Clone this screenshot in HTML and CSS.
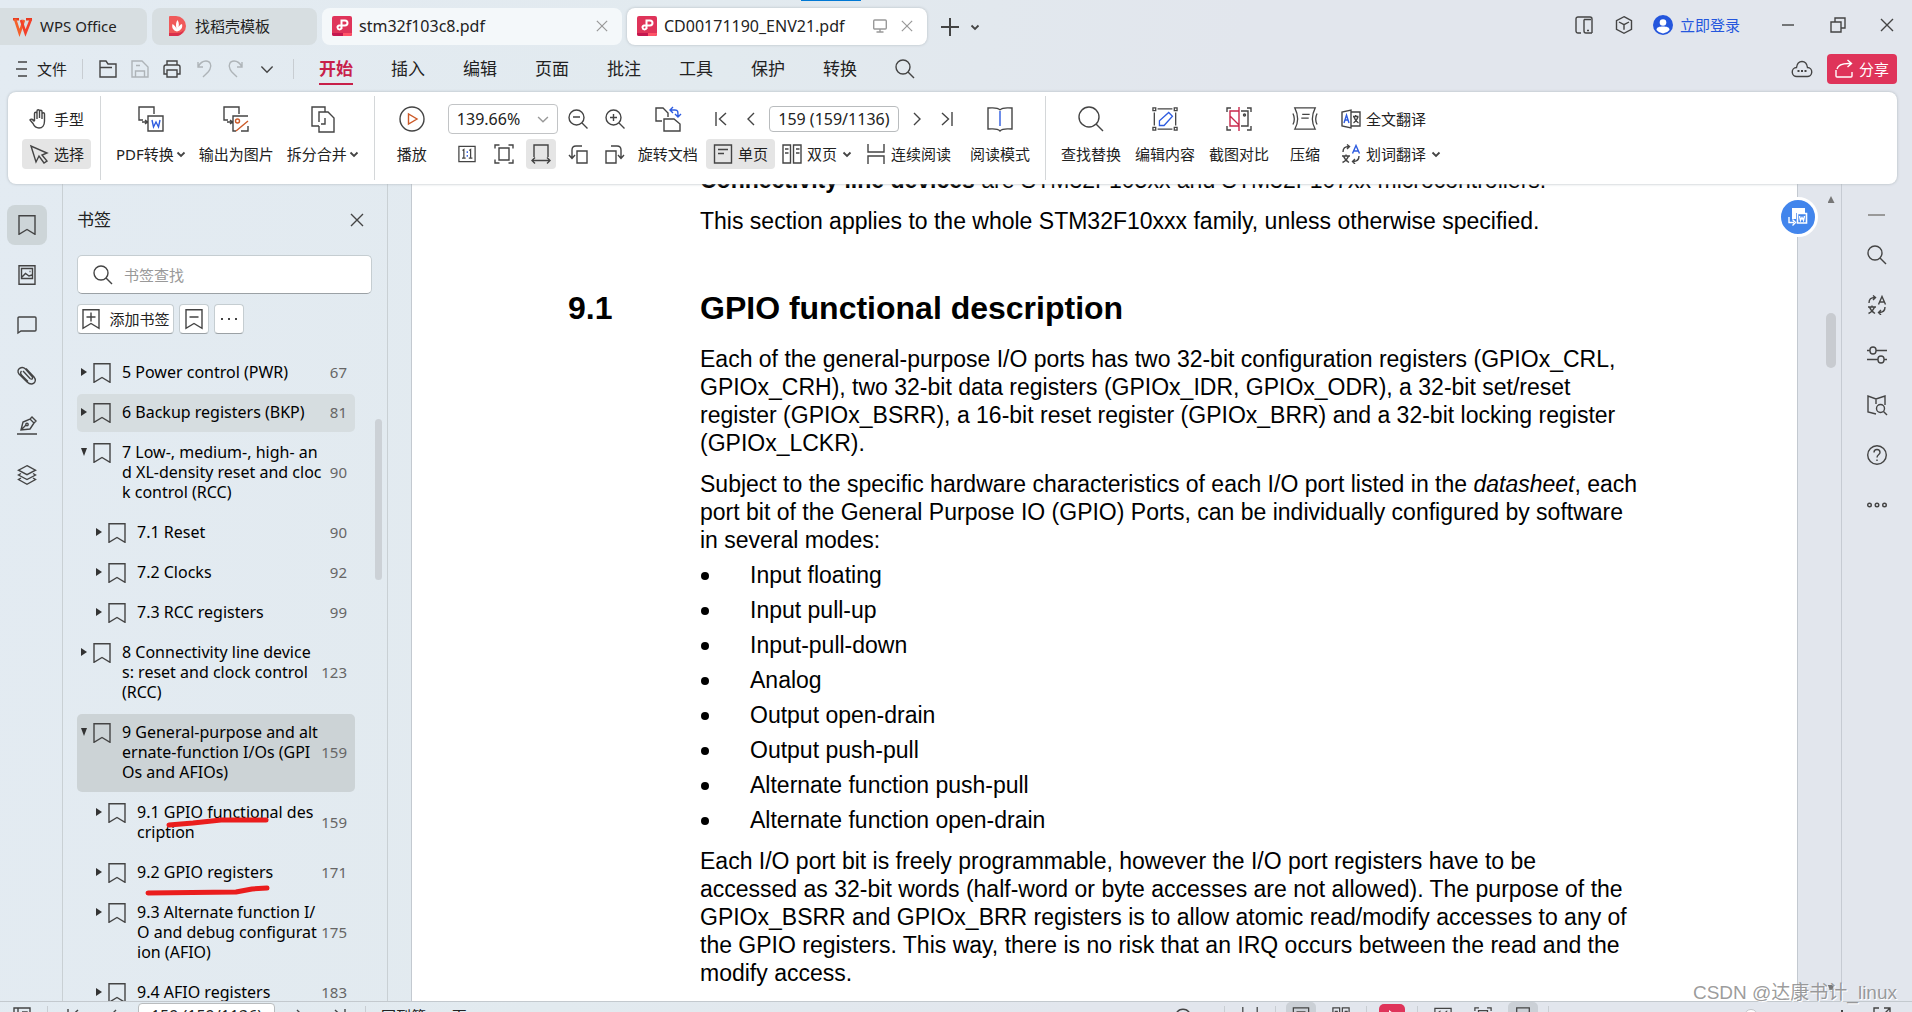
FILE: index.html
```html
<!DOCTYPE html>
<html lang="zh-CN">
<head>
<meta charset="utf-8">
<title>CD00171190_ENV21.pdf - WPS Office</title>
<link rel="stylesheet" href="styles.css">
</head>
<body>
<svg class="sprite" aria-hidden="true">
  <symbol id="i-pdf" viewBox="0 0 20 20"><rect width="20" height="20" rx="2" fill="#df345a"/><path d="M0 17h20v1a2 2 0 0 1-2 2H2a2 2 0 0 1-2-2z" fill="#c4174f"/><path d="M11 17h9v1a2 2 0 0 1-2 2h-7z" fill="#ff5468"/><path d="M9.500 13V4.500h3.500a2.500 2.500 0 0 1 0 5H7a2 2 0 1 0 2.500 2.200" fill="none" stroke="#fff" stroke-width="2"/></symbol>
  <symbol id="i-close" viewBox="0 0 14 14"><path d="M1 1l12 12M13 1L1 13"/></symbol>
  <symbol id="i-down" viewBox="0 0 10 10"><path d="M1.500 3.500L5 7l3.500-3.500" vector-effect="non-scaling-stroke"/></symbol>
  <symbol id="i-search" viewBox="0 0 20 20"><circle cx="8" cy="8" r="7"/><path d="M13 13l6 6"/></symbol>
  <symbol id="i-bookmark" viewBox="0 0 20 20"><path d="M2 .7h16v18.600l-8-4.800-8 4.800z"/></symbol>
  <symbol id="i-first" viewBox="0 0 12 14"><path d="M1 0v14M11 1L4.500 7l6.500 6"/></symbol>
  <symbol id="i-prev" viewBox="0 0 12 14"><path d="M9 1L3 7l6 6"/></symbol>
  <symbol id="i-next" viewBox="0 0 12 14"><path d="M3 1l6 6-6 6"/></symbol>
  <symbol id="i-last" viewBox="0 0 12 14"><path d="M11 0v14M1 1l6.500 6L1 13"/></symbol>
  <symbol id="i-one" viewBox="0 0 20 20"><path d="M1 1.500h18v17H1zM5 6l1.500-1v9.500M4.500 14.500h4M12.500 6L14 5v9.500M12 14.500h4"/><path d="M10.300 7v2M10.300 11v2" stroke="#2e5ce0"/></symbol>
  <symbol id="i-fit" viewBox="0 0 20 20"><path d="M5 4h10v12H5zM1 4.500V1h4.500M14.500 1H19v3.500M19 15.500V19h-4.500M5.500 19H1v-3.500"/></symbol>
  <symbol id="i-width" viewBox="0 0 20 20"><path d="M3 13V1h14v12M1 16.500h18M4 13.500l-3 3 3 3M16 13.500l3 3-3 3"/></symbol>
  <symbol id="i-single" viewBox="0 0 20 20"><path d="M1.500 1h17v18h-17zM5 5.500h10M5 9.500h6"/></symbol>
  <symbol id="i-double" viewBox="0 0 20 20"><path d="M1 1h7.500v18H1zM11.500 1H19v18h-7.500zM3 5h3.500M3 9h3.500M14 5h3.500M14 9h3.500"/></symbol>
  <symbol id="i-cont" viewBox="0 0 20 20"><path d="M2 0v8h16V0M2 20v-8h16v8"/></symbol>
  <symbol id="i-trans" viewBox="0 0 20 20"><path d="M2 8c0-4 2-5.500 6-5.500M6 .5l2.500 2L6 5M18 12c0 4-2 5.500-6 5.500M14 15l-2.500 2.500L14 20"/><path d="M1 12h8M5 10.500V12M2.500 12c1 3 3 5 5.500 6.500M7.500 12c-1 3-3 5-6 6.500"/><path class="accent" d="M11.500 9.500L15 1.500l3.500 8M12.700 7h4.600"/></symbol>
</svg>

<div class="app">
  <header class="titlebar">
    <nav class="tabs" aria-label="标签页">
      <button class="tab tab-home"><svg class="ic" viewBox="0 0 20 18"><path d="M0 2.200h6M13 2.200h6" stroke="#e8391f" stroke-width="2.500"/><path d="M2 2l4.500 14L11 3" stroke="#f4602a" stroke-width="2.600"/><path d="M8 3l4.500 13L18 2" stroke="#f2402a" stroke-width="2.600"/></svg>WPS Office</button>
      <button class="tab tab-docer"><svg class="ic art" viewBox="0 0 20 20"><path d="M1 1a1 1 0 0 1 1-1h6a10 10 0 0 1 0 20H1z" fill="#f05a5a"/><path d="M1 17h8c3 0 5-1 7-3-2 4-4 6-8 6H1z" fill="#d9304c"/><path d="M9 15.500c-4-1-5.500-4-4.500-7.500 2 1 3.500 3 4 5-1-4-.5-7 1-9 2 3 1.500 6 .5 9 .5-2.500 1.500-4 4-5 1 3.500-1 6.500-5 7.500z" fill="#fff"/></svg>找稻壳模板</button>
      <button class="tab tab-file"><svg class="ic art"><use href="#i-pdf"/></svg><span>stm32f103c8.pdf</span><svg class="ic s12 dim"><use href="#i-close"/></svg></button>
      <button class="tab tab-file active"><svg class="ic art"><use href="#i-pdf"/></svg><span>CD00171190_ENV21.pdf</span><svg class="ic s14 dim" viewBox="0 0 14 14"><rect x=".7" y="1" width="12.600" height="9" rx="1"/><path d="M7 10v3M3.500 13h7"/></svg><svg class="ic s12 dim"><use href="#i-close"/></svg></button>
      <button class="plain" aria-label="新建"><svg class="ic s18" viewBox="0 0 18 18"><path d="M9 0v18M0 9h18" stroke-width="2"/></svg></button>
      <button class="plain more-tabs" aria-label="标签列表"><svg class="ic s10 bold"><use href="#i-down"/></svg></button>
    </nav>
    <div class="win">
      <button class="plain" aria-label="侧栏"><svg class="ic s18" viewBox="0 0 18 18"><path d="M6 17H3a2 2 0 0 1-2-2V3a2 2 0 0 1 2-2h12a2 2 0 0 1 2 2v14M9 3.500h7M9 3.500V15a2 2 0 0 0 2 2h6M12 14.500h2"/></svg></button>
      <button class="plain" aria-label="应用"><svg class="ic s18" viewBox="0 0 18 18"><path d="M9 .7l7.500 4v8.600L9 17.300l-7.500-4V4.700zM4 6l5 2.700L14 6M9 8.700v5"/></svg></button>
      <a class="login" href="#login"><svg class="ic art" viewBox="0 0 20 20"><circle cx="10" cy="10" r="10" fill="#2456dd"/><circle cx="10" cy="7.500" r="3.300" fill="#fff"/><path d="M3.500 15c0-3 3-3.500 6.500-3.500s6.500.5 6.500 3.500A9 9 0 0 1 10 18.500 9 9 0 0 1 3.500 15z" fill="#fff"/></svg>立即登录</a>
      <button class="plain" aria-label="最小化"><svg class="ic s16" viewBox="0 0 16 16"><path d="M2 8h12"/></svg></button>
      <button class="plain" aria-label="还原"><svg class="ic s16" viewBox="0 0 16 16"><path d="M1 5h10v10H1zM5 5V1h10v10h-4"/></svg></button>
      <button class="plain" aria-label="关闭"><svg class="ic s14"><use href="#i-close"/></svg></button>
    </div>
    <i class="drag-mark"></i>
  </header>

  <div class="menubar">
    <button class="plain file-menu"><svg class="ic s16" viewBox="0 0 16 16"><path d="M4 1h9M2 8h11M4 15h9"/></svg>文件</button>
    <i class="vr"></i>
    <div class="quick">
      <button class="plain" aria-label="打开"><svg class="ic s18" viewBox="0 0 18 18"><path d="M1 17V1h6l2 3h8v13zM1 7.500h12"/></svg></button>
      <button class="plain faint" aria-label="保存"><svg class="ic s18" viewBox="0 0 18 18"><path d="M4 17H1V1h10l6 6v10h-3M4.500 17v-6h9v6zM5 5.500h4"/></svg></button>
      <button class="plain" aria-label="打印"><svg class="ic s18" viewBox="0 0 18 18"><path d="M4 5V1h10v4M4 14H1V7a2 2 0 0 1 2-2h12a2 2 0 0 1 2 2v7h-3M4 10h10v7H4z"/></svg></button>
      <button class="plain faint" aria-label="撤销"><svg class="ic s18" viewBox="0 0 18 18"><path d="M3 2v5h5M3 7c2-4 5-6 8-6 4 0 6 4 4 8-1 3-4 5-7 8"/></svg></button>
      <button class="plain faint" aria-label="重做"><svg class="ic s18" viewBox="0 0 18 18"><path d="M15 2v5h-5M15 7c-2-4-5-6-8-6-4 0-6 4-4 8 1 3 4 5 7 8"/></svg></button>
      <button class="plain" aria-label="更多"><svg class="ic s16"><use href="#i-down"/></svg></button>
    </div>
    <i class="vr"></i>
    <nav class="menus">
      <a class="on" href="#home">开始</a><a href="#insert">插入</a><a href="#edit">编辑</a><a href="#page">页面</a><a href="#note">批注</a><a href="#tool">工具</a><a href="#protect">保护</a><a href="#convert">转换</a>
      <button class="plain" aria-label="搜索"><svg class="ic"><use href="#i-search"/></svg></button>
    </nav>
    <div class="share-box">
      <button class="plain" aria-label="云状态"><svg class="ic" viewBox="0 0 20 20"><path d="M5 17.500a4.500 4.500 0 0 1-.5-9C5 5 7 2.500 10 2.500S15 5 15.500 8.500a4.500 4.500 0 0 1-.5 9z"/><path d="M5.500 12h2M9 12h2M12.500 12h2" stroke-width="2"/></svg></button>
      <button class="share"><svg class="ic s18" viewBox="0 0 18 18"><path d="M1 10v6a1 1 0 0 0 1 1h14a1 1 0 0 0 1-1v-4M2 9c1-4 5-6 14-5.500M12.500 0l4 3.500-4 3.500"/></svg>分享</button>
    </div>
  </div>

  <section class="ribbon" aria-label="开始">
    <div class="group modes">
      <button class="rb"><svg class="ic" viewBox="0 0 20 20"><path d="M5.500 12V4.500a1.200 1.200 0 0 1 2.500 0V10M8 9V2a1.200 1.200 0 0 1 2.500 0v7M10.500 9V2.500a1.200 1.200 0 0 1 2.500 0V10M13 9V5a1.200 1.200 0 0 1 2.500 0v7c0 4-2 7-5.500 7-3 0-4.700-1.500-6-4.500L1 11c1-1.500 2.500-1 4.500 1.500"/></svg>手型</button>
      <button class="rb on"><svg class="ic" viewBox="0 0 20 20"><path d="M2 2l5 16 3-6 5 7 3-2-5-6 5-2z"/></svg>选择</button>
    </div>
    <div class="group convert">
      <button class="big"><svg class="ic s26" viewBox="0 0 26 26"><path d="M5 14H1V1h15v7M4 16h5M7 14l2.500 2L7 18M10 10h15v15H10z"/><path d="M14 14l1.500 7 2.500-5 2.500 5L22 14" stroke="#2e5ce0"/></svg><span>PDF转换<svg class="ic s10 bold"><use href="#i-down"/></svg></span></button>
      <button class="big"><svg class="ic s26" viewBox="0 0 26 26"><path d="M5 14H1V1h15v7M4 16h5M7 14l2.500 2L7 18M25 10H10v15h3M18 25h7v-5"/><g stroke="#cc5a28"><circle cx="14.500" cy="15" r="2"/><path d="M13 25l12-10"/></g></svg><span>输出为图片</span></button>
      <button class="big"><svg class="ic s26" viewBox="0 0 26 26"><path d="M15 6V1H2v19h7M9 16V6h9l6 6v14H9v-6M15 12v6h-4"/></svg><span>拆分合并<svg class="ic s10 bold"><use href="#i-down"/></svg></span></button>
    </div>
    <div class="group view">
      <button class="big"><svg class="ic s26" viewBox="0 0 26 26"><circle cx="13" cy="13" r="12"/><path d="M9.500 8v10l8.500-5z" stroke="#cc5a28"/></svg><span>播放</span></button>
      <div class="block">
        <div class="row zoom-row">
          <span class="combo"><select aria-label="缩放比例"><option>139.66%</option></select><svg class="ic s14 dim"><use href="#i-down"/></svg></span>
          <button class="sq" aria-label="缩小"><svg class="ic" viewBox="0 0 20 20"><circle cx="8.500" cy="8.500" r="7.500"/><path d="M14 14l5.500 5.500M5 8h7"/></svg></button>
          <button class="sq gap7" aria-label="放大"><svg class="ic" viewBox="0 0 20 20"><circle cx="8.500" cy="8.500" r="7.500"/><path d="M14 14l5.500 5.500M5 8.500h7M8.500 5v7"/></svg></button>
        </div>
        <div class="row fit-row">
          <button class="sq" aria-label="实际大小"><svg class="ic s18"><use href="#i-one"/></svg></button>
          <button class="sq" aria-label="适合页面"><svg class="ic"><use href="#i-fit"/></svg></button>
          <button class="sq on" aria-label="适合宽度"><svg class="ic"><use href="#i-width"/></svg></button>
          <button class="sq" aria-label="向左旋转"><svg class="ic" viewBox="0 0 20 20"><path d="M9 7h10v12H9zM14 2H8C5 2 4 3 4 6v8M1 11l3 3.500L7 11"/></svg></button>
          <button class="sq" aria-label="向右旋转"><svg class="ic" viewBox="0 0 20 20"><path d="M1 7h10v12H1zM6 2h6c3 0 4 1 4 4v8M13 11l3 3.500 3-3.500"/></svg></button>
        </div>
      </div>
      <button class="big tight"><svg class="ic s26" viewBox="0 0 26 26"><path d="M7 15H1V2h7l5 5v4M9 25V13h10l6 5v7z"/><path d="M18 1l-3 3 3 3M15 4h5c3 0 3 1 3 7M20 8l3 3 3-3" stroke="#2e5ce0"/></svg><span>旋转文档</span></button>
      <div class="block">
        <div class="row nav-row">
          <button class="sq" aria-label="首页"><svg class="ic s14"><use href="#i-first"/></svg></button>
          <button class="sq" aria-label="上一页"><svg class="ic s14"><use href="#i-prev"/></svg></button>
          <input class="pagebox" aria-label="页码" value="159 (159/1136)">
          <button class="sq" aria-label="下一页"><svg class="ic s14"><use href="#i-next"/></svg></button>
          <button class="sq" aria-label="末页"><svg class="ic s14"><use href="#i-last"/></svg></button>
        </div>
        <div class="row view-row">
          <button class="rb on"><svg class="ic"><use href="#i-single"/></svg>单页</button>
          <button class="rb"><svg class="ic"><use href="#i-double"/></svg>双页<svg class="ic s10 bold"><use href="#i-down"/></svg></button>
          <button class="rb"><svg class="ic"><use href="#i-cont"/></svg>连续阅读</button>
        </div>
      </div>
      <button class="big read"><svg class="ic s26" viewBox="0 0 26 26"><path d="M13 4C10 1 7 2 1 2v21c6 0 9-1 12 2 3-3 6-2 12-2V2c-6 0-9-1-12 2"/><path d="M13 5v15" stroke="#2e5ce0"/></svg><span>阅读模式</span></button>
    </div>
    <div class="group last">
      <button class="big"><svg class="ic s26" viewBox="0 0 26 26"><circle cx="11" cy="11" r="10"/><path d="M18 18l7 7"/></svg><span>查找替换</span></button>
      <button class="big"><svg class="ic s28" viewBox="0 0 28 28"><path d="M1 2h3v3H1zM24 2h3v3h-3zM1 23h3v3H1zM24 23h3v3h-3zM6 3h16M6 25h16M2.500 7v14M25.500 7v14"/><path d="M8 21v-5L18 7l4 4-9 10z" stroke="#2e5ce0"/></svg><span>编辑内容</span></button>
      <button class="big"><svg class="ic s26" viewBox="0 0 26 26"><path d="M1 6V2h4M21 2h4v4M25 20v4h-4M5 24H1v-4M15 5h7v15h-7"/><circle cx="18.500" cy="9" r="1"/><path d="M13 1v24M13 5H4v15h9M4 10l9 9" stroke="#c8284c"/></svg><span>截图对比</span></button>
      <button class="big"><svg class="ic s28" viewBox="0 0 28 28"><path d="M3 2h22c-4 8-4 16 0 23H3c4-7 4-15 0-23zM11 9h8M10 13h8M1 8c2 4 2 8 0 12M27 8c-2 4-2 8 0 12"/></svg><span>压缩</span></button>
      <div class="block">
        <button class="rb flat"><svg class="ic" viewBox="0 0 20 20"><path d="M10 4V1L1 3v14l9 2zM10 3h9v14h-9M12 7.500h5.500M14.700 6v1.500M13 8c1 3 2 4.500 4.500 6M17 8c-1 3-2 4.500-4.500 6"/><path d="M3 14l2.500-8L8 14M4 11h3" stroke="#2e5ce0"/></svg>全文翻译</button>
        <button class="rb flat blue-a"><svg class="ic"><use href="#i-trans"/></svg>划词翻译<svg class="ic s10 bold"><use href="#i-down"/></svg></button>
      </div>
    </div>
  </section>

  <main class="main">
    <nav class="rail" aria-label="侧边工具">
      <button class="on" aria-label="书签"><svg class="ic"><use href="#i-bookmark"/></svg></button>
      <button aria-label="缩略图"><svg class="ic" viewBox="0 0 20 20"><path d="M2 .7h16v18.600H2zM4.500 3.500h11v10h-11zM5 12l3.500-3.500L12 11l3-1M12.500 6.500h1"/></svg></button>
      <button aria-label="批注"><svg class="ic" viewBox="0 0 20 20"><path d="M1 18V3a1 1 0 0 1 1-1h16a1 1 0 0 1 1 1v12a1 1 0 0 1-1 1H4z"/></svg></button>
      <button aria-label="附件"><svg class="ic" viewBox="0 0 20 20"><path d="M6 6l7 7.500c2 1.500 3.500 0 2-2L8.500 4C5 .5-1.500 4 2 9l8 8c5 4.500 11 0 7-5L9 3.500M4.500 6C3 7.500 3.500 9 5 10.500l6 6"/></svg></button>
      <button aria-label="签名"><svg class="ic" viewBox="0 0 20 20"><path d="M0 19h20M4 15l2-8 7-3 4 4-4 6zM4 15l5-5M13 4l2-2 4 4-2 2"/><circle cx="10" cy="9.500" r="1.200"/></svg></button>
      <button aria-label="图层"><svg class="ic" viewBox="0 0 20 20"><path d="M10 .7l8.500 4.500L10 9.700 1.500 5.200zM4 8.500l-2.500 1.500L10 14.500l8.500-4.500L16 8.500M4 13l-2.500 1.500L10 19.300l8.500-4.800L16 13"/></svg></button>
    </nav>

    <aside class="panel">
      <div class="panel-head"><h2>书签</h2><button class="plain" aria-label="关闭书签"><svg class="ic s14"><use href="#i-close"/></svg></button></div>
      <label class="find"><svg class="ic"><use href="#i-search"/></svg><input type="text" placeholder="书签查找" aria-label="书签查找"></label>
      <div class="panel-tools">
        <button class="tool add"><svg class="ic" viewBox="0 0 20 20"><path d="M2 .7h16v18.600l-8-4.800-8 4.800zM5.500 8h9M10 3.500v9"/></svg>添加书签</button>
        <button class="tool" aria-label="删除书签"><svg class="ic" viewBox="0 0 20 20"><path d="M2 .7h16v18.600l-8-4.800-8 4.800zM5.500 8h9"/></svg></button>
        <button class="tool" aria-label="更多"><svg class="ic" viewBox="0 0 20 20"><path d="M2 10h2M9 10h2M16 10h2" stroke-width="2"/></svg></button>
      </div>
      <div class="tree-wrap">
        <ul class="tree">
          <li><i class="tw"></i><svg class="ic"><use href="#i-bookmark"/></svg><span>5 Power control (PWR)</span><b>67</b></li>
          <li class="hover"><i class="tw"></i><svg class="ic"><use href="#i-bookmark"/></svg><span>6 Backup registers (BKP)</span><b>81</b></li>
          <li><i class="tw open"></i><svg class="ic"><use href="#i-bookmark"/></svg><span>7 Low-, medium-, high- an<br>d XL-density reset and cloc<br>k control (RCC)</span><b>90</b></li>
          <li class="sub"><i class="tw"></i><svg class="ic"><use href="#i-bookmark"/></svg><span>7.1 Reset</span><b>90</b></li>
          <li class="sub"><i class="tw"></i><svg class="ic"><use href="#i-bookmark"/></svg><span>7.2 Clocks</span><b>92</b></li>
          <li class="sub"><i class="tw"></i><svg class="ic"><use href="#i-bookmark"/></svg><span>7.3 RCC registers</span><b>99</b></li>
          <li><i class="tw"></i><svg class="ic"><use href="#i-bookmark"/></svg><span>8 Connectivity line device<br>s: reset and clock control<br>(RCC)</span><b>123</b></li>
          <li class="current"><i class="tw open"></i><svg class="ic"><use href="#i-bookmark"/></svg><span>9 General-purpose and alt<br>ernate-function I/Os (GPI<br>Os and AFIOs)</span><b>159</b></li>
          <li class="sub"><i class="tw"></i><svg class="ic"><use href="#i-bookmark"/></svg><span>9.1 GPIO functional des<br>cription</span><b>159</b>
            <svg class="ink ink-a" viewBox="0 0 104 12"><path d="M3 8l24-2 28-3h45"/></svg></li>
          <li class="sub"><i class="tw"></i><svg class="ic"><use href="#i-bookmark"/></svg><span>9.2 GPIO registers</span><b>171</b>
            <svg class="ink ink-b" viewBox="0 0 126 12"><path d="M3 8l88-1 16-3 15-1"/></svg></li>
          <li class="sub"><i class="tw"></i><svg class="ic"><use href="#i-bookmark"/></svg><span>9.3 Alternate function I/<br>O and debug configurat<br>ion (AFIO)</span><b>175</b></li>
          <li class="sub"><i class="tw"></i><svg class="ic"><use href="#i-bookmark"/></svg><span>9.4 AFIO registers</span><b>183</b></li>
        </ul>
        <i class="thumb"></i>
      </div>
    </aside>

    <div class="viewer">
      <article class="page">
        <p><strong>Connectivity line devices</strong> are STM32F105xx and STM32F107xx microcontrollers.</p>
        <p>This section applies to the whole STM32F10xxx family, unless otherwise specified.</p>
        <h1><span>9.1</span>GPIO functional description</h1>
        <p>Each of the general-purpose I/O ports has two 32-bit configuration registers (GPIOx_CRL,<br>GPIOx_CRH), two 32-bit data registers (GPIOx_IDR, GPIOx_ODR), a 32-bit set/reset<br>register (GPIOx_BSRR), a 16-bit reset register (GPIOx_BRR) and a 32-bit locking register<br>(GPIOx_LCKR).</p>
        <p>Subject to the specific hardware characteristics of each I/O port listed in the <em>datasheet</em>, each<br>port bit of the General Purpose IO (GPIO) Ports, can be individually configured by software<br>in several modes:</p>
        <ul>
          <li>Input floating</li><li>Input pull-up</li><li>Input-pull-down</li><li>Analog</li><li>Output open-drain</li><li>Output push-pull</li><li>Alternate function push-pull</li><li>Alternate function open-drain</li>
        </ul>
        <p>Each I/O port bit is freely programmable, however the I/O port registers have to be<br>accessed as 32-bit words (half-word or byte accesses are not allowed). The purpose of the<br>GPIOx_BSRR and GPIOx_BRR registers is to allow atomic read/modify accesses to any of<br>the GPIO registers. This way, there is no risk that an IRQ occurs between the read and the<br>modify access.</p>
      </article>
      <div class="scroller"><i class="up"></i><i class="thumb"></i><i class="dn"></i></div>
      <button class="float" aria-label="转换为Word"><svg class="ic art" viewBox="0 0 20 20"><path d="M4 1h13v5H8v6H4z" fill="#fff"/><path d="M9.500 6.500h9v9.500h-9z" fill="#4285ec" stroke="#fff" stroke-width="1.600"/><path d="M11.500 9l1 4.500 1.500-3 1.500 3 1-4.500M1 10v5.500h5M4.500 12.500l3 3-3 3" fill="none" stroke="#fff" stroke-width="1.400"/></svg></button>
    </div>

    <nav class="rail right" aria-label="工具">
      <button class="fold" aria-label="收起"><svg class="ic" viewBox="0 0 20 20"><path d="M1 10h17" stroke="#999" stroke-width="2"/></svg></button>
      <button aria-label="搜索"><svg class="ic"><use href="#i-search"/></svg></button>
      <button aria-label="翻译"><svg class="ic"><use href="#i-trans"/></svg></button>
      <button aria-label="设置"><svg class="ic" viewBox="0 0 20 20"><path d="M0 5.500h3M9 5.500h11M0 14.500h11M17 14.500h3"/><rect x="3" y="2" width="6" height="7" rx="3"/><rect x="11" y="11" width="6" height="7" rx="3"/></svg></button>
      <button aria-label="查词"><svg class="ic" viewBox="0 0 20 20"><path d="M9 19l-8-2V1l8 3 9-3v9M9 4v5"/><circle cx="13.500" cy="13.500" r="4"/><path d="M16.500 16.500L20 20"/></svg></button>
      <button aria-label="帮助"><svg class="ic" viewBox="0 0 20 20"><circle cx="10" cy="10" r="9.300"/><path d="M7 7.500c0-4 6-4 6 0 0 2-3 2-3 5M10 14.500v1.500"/></svg></button>
      <button aria-label="更多"><svg class="ic" viewBox="0 0 20 20"><circle cx="2.500" cy="10" r="1.800"/><circle cx="10" cy="10" r="1.800"/><circle cx="17.500" cy="10" r="1.800"/></svg></button>
    </nav>
  </main>

  <footer class="status">
    <button class="st" aria-label="导航窗格"><svg class="ic s18" viewBox="0 0 18 18"><path d="M1 1h16v16H1zM5 1v16M9 5h5v5"/></svg></button>
    <i class="vr"></i>
    <div class="st-nav">
      <button class="st" aria-label="首页"><svg class="ic s14"><use href="#i-first"/></svg></button>
      <button class="st" aria-label="上一页"><svg class="ic s14"><use href="#i-prev"/></svg></button>
      <input class="pagebox" aria-label="当前页" value="159 (159/1136)">
      <button class="st" aria-label="下一页"><svg class="ic s14"><use href="#i-next"/></svg></button>
      <button class="st" aria-label="末页"><svg class="ic s14"><use href="#i-last"/></svg></button>
    </div>
    <i class="vr"></i>
    <a class="back" href="#p161">回到第161页</a>
    <div class="st-right">
      <button class="st eye" aria-label="护眼"><svg class="ic s18" viewBox="0 0 18 18"><path d="M1 9c3-9 13-9 16 0-3 9-13 9-16 0z"/><circle cx="9" cy="9" r="3"/></svg></button>
      <i class="vr"></i>
      <button class="st" aria-label="连续"><svg class="ic s18"><use href="#i-cont"/></svg></button>
      <i class="vr"></i>
      <button class="st on" aria-label="单页"><svg class="ic s18"><use href="#i-single"/></svg></button>
      <button class="st" aria-label="双页"><svg class="ic s18"><use href="#i-double"/></svg></button>
      <i class="vr"></i>
      <button class="st play" aria-label="播放"><svg class="ic s18 art" viewBox="0 0 18 18"><path d="M6 3v12l8-6z" fill="#fff"/></svg></button>
      <i class="vr"></i>
      <button class="st" aria-label="实际大小"><svg class="ic s18"><use href="#i-one"/></svg></button>
      <button class="st" aria-label="适合页面"><svg class="ic s18"><use href="#i-fit"/></svg></button>
      <button class="st on" aria-label="适合宽度"><svg class="ic s18"><use href="#i-width"/></svg></button>
      <i class="vr"></i>
      <span class="pct">140%</span>
      <input class="slider" type="range" min="0" max="100" value="50" aria-label="缩放">
      <button class="st" aria-label="放大"><svg class="ic s14" viewBox="0 0 14 14"><path d="M7 1v12M1 7h12" stroke-width="2"/></svg></button>
      <button class="st" aria-label="全屏"><svg class="ic s18" viewBox="0 0 18 18"><path d="M1 6V1h5M11 1h6v6M17 1l-6 6M1 11v6h6M1 17l6-6M17 12v5h-5"/></svg></button>
    </div>
  </footer>
  <div class="watermark">CSDN @达康书计_linux</div>
</div>
</body>
</html>
```
FILE: styles.css
```css
* { box-sizing: border-box; }
html, body { margin: 0; height: 100%; overflow: hidden; }
body {
  font: 15px/20px "Noto Sans", "Noto Sans CJK SC", sans-serif;
  color: #222;
  background: linear-gradient(100deg, #e3ebf2 0%, #e2eaef 35%, #e2e6ed 60%, #e2e6ed 100%);
}
button, input, select { font: inherit; color: inherit; }
button { background: none; border: 0; padding: 0; }
a { color: inherit; text-decoration: none; }
i { display: block; }
.sprite { display: none; }

.ic { width: 20px; height: 20px; flex: none; display: block; fill: none; stroke: #444; stroke-width: 1.4; overflow: visible; }
.ic.art { stroke: none; }
.s10 { width: 10px; height: 10px; }
.s12 { width: 12px; height: 12px; }
.s14 { width: 14px; height: 14px; }
.s16 { width: 16px; height: 16px; }
.s18 { width: 18px; height: 18px; }
.s26 { width: 26px; height: 26px; }
.s28 { width: 28px; height: 26px; }
.ic.dim { stroke: #999; }
.ic.bold { stroke-width: 1.8; }
.plain { display: flex; align-items: center; }
.faint .ic { stroke: #aeb4b8; }
.vr { width: 1px; height: 20px; background: #c8cdd2; }

.app { position: relative; display: flex; flex-direction: column; height: calc(100vh + 17px); }

/* title bar */
.titlebar { display: flex; justify-content: space-between; height: 45px; position: relative; }
.tabs { display: flex; gap: 5px; padding-top: 8px; }
.tab { display: flex; align-items: center; gap: 7px; padding-bottom: 1px; border-radius: 8px; background: #d7dee1; white-space: nowrap; }
.tab-home { width: 147px; padding-left: 13px; border-radius: 0 8px 8px 0; }
.tab-docer { width: 165px; padding-left: 16px; }
.tab-file { width: 300px; padding: 0 14px 1px 10px; background: #f4f8fa; font-size: 16px; }
.tab-file span { flex: 1; text-align: left; }
.tab-file.active { background: #fff; box-shadow: 0 0 3px #b4bbc1; gap: 14px; }
.tab-file.active span { margin-left: -7px; }
.tabs > .plain { padding-left: 9px; }
.tabs > .more-tabs { padding-left: 6px; }
.win { display: flex; align-items: center; padding: 4px 18px 0 0; gap: 22px; }
.login { display: flex; align-items: center; gap: 7px; color: #2456dd; margin-right: 18px; margin-left: -2px; }
.login ~ .plain { margin-right: 12px; }
.login ~ .plain:last-child { margin-right: 0; }
.drag-mark { position: absolute; left: 801px; top: 0; width: 60px; height: 1px; background: #0078d4; }

/* menu bar */
.menubar { display: flex; align-items: center; height: 47px; padding: 0 15px 0 14px; }
.file-menu { gap: 7px; margin-right: 15px; }
.quick { display: flex; align-items: center; gap: 14px; margin: 0 18px 0 16px; }
.menus { display: flex; align-items: center; gap: 38px; margin-left: 25px; font-size: 17px; }
.menus a { position: relative; }
.menus .on { color: #c8204a; font-weight: 700; }
.menus .on::after { content: ""; position: absolute; left: 0; right: 0; bottom: -6px; height: 2px; background: #c8204a; }
.share-box { display: flex; align-items: center; gap: 15px; margin-left: auto; }
.share { display: flex; align-items: center; gap: 6px; height: 30px; padding: 0 8px; border-radius: 4px; background: #df345a; color: #fff; }
.share .ic { stroke: #fff; }

/* ribbon */
.ribbon { position: relative; z-index: 2; display: flex; flex: none; margin: 0 15px 0 8px; height: 92px; padding: 4px 0; background: #fff; border-radius: 8px; box-shadow: 0 0 3px #aeb6bc; }
.group { display: flex; gap: 14px; padding: 8px 15px 0; border-right: 1px solid #d4d7d9; }
.group.last { border: 0; }
.modes { flex-direction: column; gap: 5px; padding: 8px 9px 0 14px; }
.convert { gap: 13px; }
.block { display: flex; flex-direction: column; gap: 5px; }
.row { display: flex; align-items: center; height: 30px; }
.rb { display: flex; align-items: center; gap: 5px; height: 30px; padding: 0 7px; border-radius: 4px; white-space: nowrap; }
.rb.flat { padding: 0; }
.on.rb, .on.sq { background: #e5e5e5; }
.big { display: flex; flex-direction: column; align-items: center; gap: 7px; min-width: 44px; padding-top: 2px; white-space: nowrap; }
.big > span { display: flex; align-items: center; gap: 2px; height: 30px; }
.tight { margin: 0 -6px; }
.read { margin-left: -6px; }
.sq { display: flex; align-items: center; justify-content: center; width: 30px; height: 30px; border-radius: 4px; }
.combo { display: flex; align-items: center; position: relative; margin-right: 5px; }
.combo select { appearance: none; width: 110px; height: 30px; padding: 0 8px; border: 1px solid #c2c4c6; border-radius: 4px; background: #fff; font-size: 16px; }
.combo .ic { position: absolute; right: 8px; }
.gap7 { margin-left: 7px; }
.fit-row { gap: 7px; padding-left: 4px; }
.pagebox { width: 130px; height: 26px; padding: 0; margin: 0 3px; text-align: center; border: 1px solid #b9bcbe; border-radius: 4px; background: #fff; font-size: 16px; }
.blue-a .ic { color: #2e5ce0; }
.accent { stroke: currentColor; }

/* body */
.main { display: flex; flex: 1; min-height: 0; }
.rail { display: flex; flex-direction: column; gap: 10px; width: 63px; padding: 21px 0 0 7px; border-right: 1px solid #c9d0d4; }
.rail button { display: flex; align-items: center; justify-content: center; width: 40px; height: 40px; border-radius: 8px; color: #444; }
.rail .on { background: #cdd5d8; }
.rail.right { width: 71px; padding: 21px 0 0 15px; border-right: 0; border-left: 1px solid #c6cbd3; }
.rail .fold { height: 20px; }

.panel { display: flex; flex-direction: column; width: 325px; padding: 24px 4px 0 14px; border-right: 1px solid #c9d0d4; }
.panel-head { display: flex; justify-content: space-between; align-items: center; height: 24px; padding-right: 19px; }
.panel-head h2 { margin: 0; font-size: 17px; font-weight: 400; }
.find { display: flex; align-items: center; gap: 11px; flex: none; height: 39px; width: 295px; margin-top: 23px; padding: 0 15px; background: #fff; border: 1px solid #c5cdd1; border-bottom-color: #9ba1a5; border-radius: 5px; }
.find input { flex: 1; min-width: 0; border: 0; padding: 0; background: none; outline: 0; }
.find input::placeholder { color: #999; opacity: 1; }
.panel-tools { display: flex; gap: 5px; margin-top: 10px; }
.tool { display: flex; align-items: center; justify-content: center; gap: 8px; width: 30px; height: 30px; background: #fff; border: 1px solid #c5cdd1; border-bottom-color: #9ba1a5; border-radius: 4px; }
.tool.add { width: 97px; white-space: nowrap; }
.tree-wrap { display: flex; flex: 1; min-height: 0; margin-top: 20px; overflow: hidden; gap: 20px; }
.tree { display: flex; flex-direction: column; gap: 2px; width: 278px; margin: 0; padding: 0; list-style: none; color: #000; }
.tree li { position: relative; display: flex; flex: none; align-items: flex-start; padding: 8px 8px 10px 4px; border-radius: 5px; white-space: nowrap; }
.tree .sub { padding-left: 19px; }
.tree .hover { background: #d6dde0; }
.tree .current { background: #ccd3d6; }
.tree .ic { margin-bottom: -1px; margin-top: 1px; }
.tree span { margin-left: 10px; font-size: 16px; }
.tree b { margin-left: auto; align-self: center; font-weight: 400; color: #666; }
.tw { width: 6px; height: 8px; margin: 6px 5px 0 0; background: #333; clip-path: polygon(0 0, 100% 50%, 0 100%); }
.tw.open { clip-path: polygon(0 0, 100% 0, 50% 100%); }
.ink { position: absolute; height: 12px; fill: none; stroke: #ea1d1d; stroke-width: 5; stroke-linecap: round; stroke-linejoin: round; }
.ink-a { left: 89px; top: 23px; width: 104px; }
.ink-b { left: 68px; top: 31px; width: 126px; }
.tree-wrap .thumb { width: 7px; height: 161px; margin-top: 65px; border-radius: 4px; background: #ccd1d6; }

.viewer { position: relative; display: flex; flex: 1; min-width: 0; padding-left: 23px; overflow: hidden; }
.page { flex: 1; min-width: 0; padding-left: 288px; background: #fff; border: solid #c3c9d0; border-width: 0 1px; overflow: hidden; font: 23px/28px "Liberation Sans", Arial, sans-serif; color: #000; white-space: nowrap; }
.page p { margin: 0 0 13px; }
.page p:first-child { margin-top: -18px; }
.page h1 { display: flex; margin: 54px 0 18px -132px; font-size: 32px; line-height: 38px; }
.page h1 span { width: 132px; }
.page ul { margin: -9px 0 9px; padding: 0; list-style: none; line-height: 35px; }
.page ul li { display: flex; align-items: center; gap: 41px; }
.page ul li::before { content: ""; width: 8px; height: 8px; margin-left: 1px; border-radius: 50%; background: #000; }
.scroller { display: flex; flex-direction: column; align-items: center; width: 43px; padding: 12px 0 9px 23px; }
.scroller .up, .scroller .dn { width: 7px; height: 7px; background: #777; clip-path: polygon(50% 0, 100% 100%, 0 100%); }
.scroller .dn { margin-top: auto; clip-path: polygon(0 0, 100% 0, 50% 100%); }
.scroller .thumb { width: 10px; height: 55px; margin-top: 110px; border-radius: 5px; background: #c8cbd0; }
.float { position: absolute; right: 23px; top: 13px; display: flex; align-items: center; justify-content: center; width: 40px; height: 40px; border: 3px solid #fff; border-radius: 50%; background: #4285ec; }

/* status bar */
.status { display: flex; flex: none; align-items: center; height: 28px; padding: 0 15px 0 7px; border-top: 1px solid #c3c9ce; }
.st { display: flex; align-items: center; justify-content: center; width: 30px; height: 28px; border-radius: 5px; }
.status > .vr { margin-left: 10px; }
.st-nav { display: flex; align-items: center; gap: 10px; margin-left: 10px; }
.status .pagebox { width: 137px; margin: 0; }
.back { margin-left: 15px; }
.st-right { display: flex; align-items: center; gap: 10px; margin-left: auto; }
.eye { margin-right: 16px; }
.st.on { background: #cbd0d6; }
.st.play { width: 26px; height: 24px; margin: 0 2px; background: #df345a; }
.pct { width: 36px; margin: 0 69px 0 11px; }
.slider { appearance: none; width: 132px; height: 14px; margin: 0; background: linear-gradient(#b5bac0, #b5bac0) center / 100% 2px no-repeat; }
.slider::-webkit-slider-thumb { appearance: none; width: 14px; height: 14px; border-radius: 50%; background: #fff; border: 1px solid #c0c4c8; }

.watermark { position: absolute; right: 15px; bottom: 22px; font: 19px/28px "Liberation Sans", "Noto Sans CJK SC", sans-serif; color: rgba(130, 130, 130, .8); text-shadow: 1px 1px 0 #fff; pointer-events: none; z-index: 3; }
```
